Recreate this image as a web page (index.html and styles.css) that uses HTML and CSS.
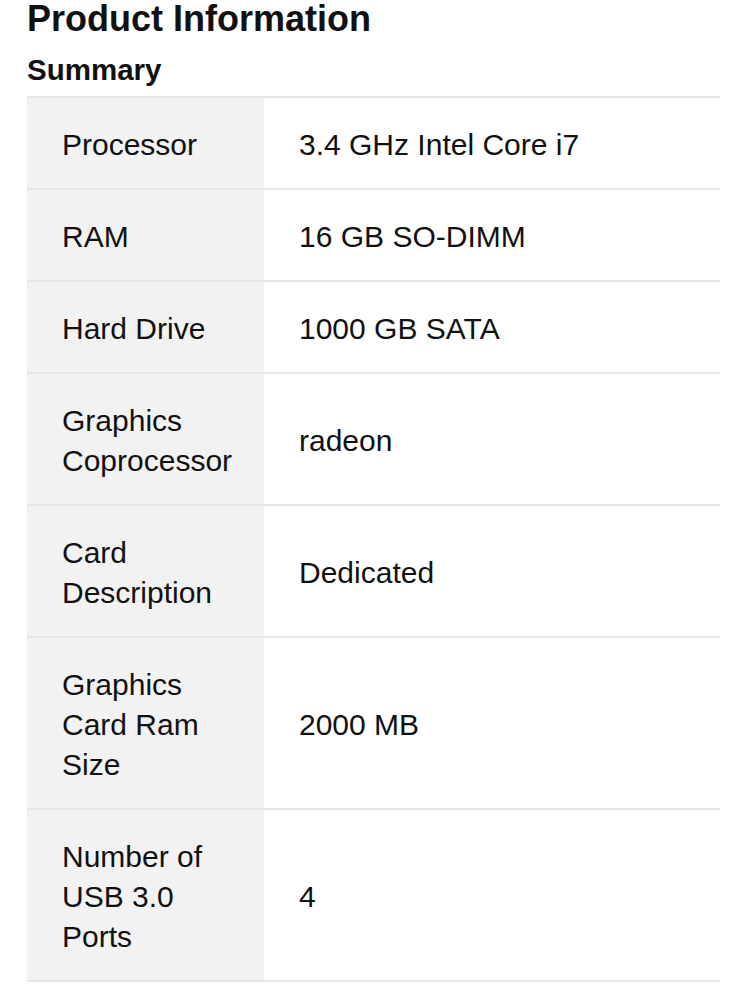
FILE: index.html
```html
<!DOCTYPE html>
<html>
<head>
<meta charset="utf-8">
<link rel="stylesheet" href="styles.css">
</head>
<body>
<div class="page">
  <h1 class="title">Product Information</h1>
  <h2 class="subtitle">Summary</h2>
  <div class="specs">
    <div class="row"><div class="label">Processor</div><div class="value">3.4 GHz Intel Core i7</div></div>
    <div class="row"><div class="label">RAM</div><div class="value">16 GB SO-DIMM</div></div>
    <div class="row"><div class="label">Hard Drive</div><div class="value">1000 GB SATA</div></div>
    <div class="row"><div class="label">Graphics Coprocessor</div><div class="value">radeon</div></div>
    <div class="row"><div class="label">Card Description</div><div class="value">Dedicated</div></div>
    <div class="row"><div class="label">Graphics Card Ram Size</div><div class="value">2000 MB</div></div>
    <div class="row"><div class="label">Number of USB 3.0 Ports</div><div class="value">4</div></div>
  </div>
</div>
</body>
</html>
```
FILE: styles.css
```css
html, body {
  margin: 0;
  padding: 0;
  background: #ffffff;
}
.page {
  padding: 0 25px 0 27px;
  font-family: "Liberation Sans", Arial, sans-serif;
  color: #111111;
}
.title {
  margin: 0;
  font-size: 36px;
  line-height: 38px;
  font-weight: bold;
}
.subtitle {
  margin: 13px 0 8px 0;
  font-size: 29.5px;
  line-height: 37px;
  font-weight: bold;
}
.specs {
  border-top: 2px solid #e6e6e6;
}
.row {
  display: grid;
  grid-template-columns: 237px 1fr;
  border-bottom: 2px solid #e6e6e6;
  font-size: 30px;
  line-height: 40px;
}
.label {
  background: #f2f2f2;
  padding: 27px 18px 23px 35px;
}
.value {
  padding: 27px 20px 23px 35px;
  display: flex;
  align-items: center;
}
```
